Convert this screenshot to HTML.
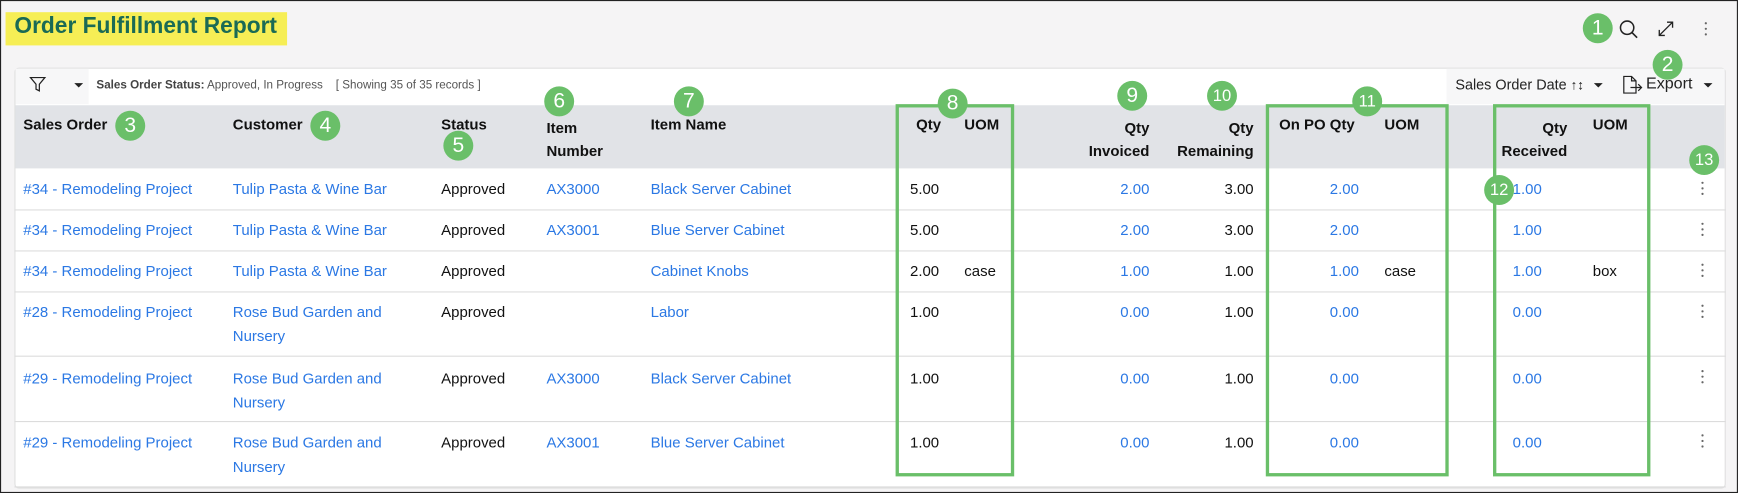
<!DOCTYPE html>
<html><head><meta charset="utf-8">
<style>
html,body{margin:0;padding:0;width:1738px;height:493px;overflow:hidden;background:#fff}
#s{position:absolute;left:0;top:0;width:1568px;height:445px;transform:scale(1.1084,1.1079);transform-origin:0 0;background:#f5f4f5;font-family:"Liberation Sans",Arial,sans-serif;box-sizing:border-box;border:1px solid #222;overflow:hidden}
.a{position:absolute;white-space:nowrap}
.t{font-size:13.5px;color:#111}
.l{font-size:13.5px;color:#2b78e4}
.h{font-size:13.5px;font-weight:bold;color:#111}
.r{text-align:right}
.c{position:absolute;width:27px;height:27px;border-radius:50%;background:#6abf69;color:#fff;font-size:19px;text-align:center;line-height:27px}
.g{position:absolute;border:3px solid #6abf69;box-sizing:border-box}
.line{position:absolute;left:12px;width:1544px;height:1px;background:#dcdcdc}
.k{position:absolute;width:3px;}
.k i{display:block;width:2px;height:2px;background:#666;border-radius:50%;margin-bottom:3px}
</style></head><body>
<div id="s">
<div class="a" style="left:4px;top:10px;width:254px;height:30px;background:#f6ee55"></div>
<div class="a" style="left:12px;top:11px;font-size:20.5px;font-weight:bold;color:#1a6a55">Order Fulfillment Report</div>

<div class="c" style="left:1427px;top:11px">1</div>
<svg class="a" style="left:1459px;top:16px" width="20" height="20" viewBox="0 0 20 20"><circle cx="8" cy="8" r="6" fill="none" stroke="#222" stroke-width="1.4"/><path d="M12.5 12.5L17 17" stroke="#222" stroke-width="1.5"/></svg>
<svg class="a" style="left:1493px;top:16px" width="18" height="18" viewBox="0 0 18 18"><path d="M3 15L15 3M10 3h5v5M3 10v5h5" fill="none" stroke="#222" stroke-width="1.2"/></svg>
<div class="k" style="left:1537px;top:19px"><i></i><i></i><i></i></div>

<div class="a" style="left:12px;top:60px;width:1544px;height:380px;background:#fff;border:1px solid #e0e0e0;border-radius:4px;box-sizing:border-box"></div>
<div class="a" style="left:13px;top:61px;width:66px;height:32px;background:#f7f7f8"></div>
<div class="a" style="left:1304px;top:61px;width:251px;height:32px;background:#f7f7f8"></div>
<svg class="a" style="left:25px;top:67px" width="16" height="16" viewBox="0 0 16 16"><path d="M1.5 2h13L9.5 8v6l-3-1.5V8z" fill="none" stroke="#222" stroke-width="1.1"/></svg>
<div class="a" style="left:66px;top:74px;border:4px solid transparent;border-top:4px solid #222"></div>
<div class="a" style="left:86px;top:70px;font-size:10.5px;color:#555"><b style="color:#444">Sales Order Status:</b> Approved, In Progress &nbsp;&nbsp; [ Showing 35 of 35 records ]</div>
<div class="a" style="left:1312px;top:68px;font-size:13px;color:#222">Sales Order Date <span style="font-size:12px">↑&#8597;</span></div>
<div class="a" style="left:1437px;top:74px;border:4px solid transparent;border-top:4px solid #222"></div>
<svg class="a" style="left:1462px;top:67px" width="20" height="18" viewBox="0 0 20 18"><path d="M2 1h7l4 4v11H2z M9 1v4h4" fill="none" stroke="#222" stroke-width="1.1"/><path d="M8 11h10M15 8l3 3-3 3" fill="none" stroke="#222" stroke-width="1.1"/></svg>
<div class="a" style="left:1484px;top:67px;font-size:14.5px;color:#222">Export</div>
<div class="a" style="left:1536px;top:74px;border:4px solid transparent;border-top:4px solid #222"></div>

<div class="a" style="left:13px;top:94px;width:1542px;height:57px;background:#e1e3e7"></div>
<div class="a h" style="left:20px;top:104px">Sales Order</div>
<div class="a h" style="left:209px;top:104px">Customer</div>
<div class="a h" style="left:397px;top:104px">Status</div>
<div class="a h" style="left:492px;top:104px;line-height:21px">Item<br>Number</div>
<div class="a h" style="left:586px;top:104px">Item Name</div>
<div class="a h r" style="left:808px;width:40px;top:104px">Qty</div>
<div class="a h" style="left:869px;top:104px">UOM</div>
<div class="a h r" style="left:980px;width:56px;top:104px;line-height:21px">Qty<br>Invoiced</div>
<div class="a h r" style="left:1050px;width:80px;top:104px;line-height:21px">Qty<br>Remaining</div>
<div class="a h" style="left:1153px;top:104px">On PO Qty</div>
<div class="a h" style="left:1248px;top:104px">UOM</div>
<div class="a h r" style="left:1340px;width:73px;top:104px;line-height:21px">Qty<br>Received</div>
<div class="a h" style="left:1436px;top:104px">UOM</div>

<div class="line" style="top:188px"></div>
<div class="line" style="top:225px"></div>
<div class="line" style="top:262px"></div>
<div class="line" style="top:320px"></div>
<div class="line" style="top:379px"></div>
<div class="line" style="top:438px"></div>

<div class="a l" style="left:20px;top:162px">#34 - Remodeling Project</div>
<div class="a l" style="left:20px;top:199px">#34 - Remodeling Project</div>
<div class="a l" style="left:20px;top:236px">#34 - Remodeling Project</div>
<div class="a l" style="left:20px;top:273px">#28 - Remodeling Project</div>
<div class="a l" style="left:20px;top:333px">#29 - Remodeling Project</div>
<div class="a l" style="left:20px;top:391px">#29 - Remodeling Project</div>

<div class="a l" style="left:209px;top:162px">Tulip Pasta &amp; Wine Bar</div>
<div class="a l" style="left:209px;top:199px">Tulip Pasta &amp; Wine Bar</div>
<div class="a l" style="left:209px;top:236px">Tulip Pasta &amp; Wine Bar</div>
<div class="a l" style="left:209px;top:270px;line-height:22px">Rose Bud Garden and<br>Nursery</div>
<div class="a l" style="left:209px;top:330px;line-height:22px">Rose Bud Garden and<br>Nursery</div>
<div class="a l" style="left:209px;top:388px;line-height:22px">Rose Bud Garden and<br>Nursery</div>

<div class="a t" style="left:397px;top:162px">Approved</div>
<div class="a t" style="left:397px;top:199px">Approved</div>
<div class="a t" style="left:397px;top:236px">Approved</div>
<div class="a t" style="left:397px;top:273px">Approved</div>
<div class="a t" style="left:397px;top:333px">Approved</div>
<div class="a t" style="left:397px;top:391px">Approved</div>

<div class="a l" style="left:492px;top:162px">AX3000</div>
<div class="a l" style="left:492px;top:199px">AX3001</div>
<div class="a l" style="left:492px;top:333px">AX3000</div>
<div class="a l" style="left:492px;top:391px">AX3001</div>

<div class="a l" style="left:586px;top:162px">Black Server Cabinet</div>
<div class="a l" style="left:586px;top:199px">Blue Server Cabinet</div>
<div class="a l" style="left:586px;top:236px">Cabinet Knobs</div>
<div class="a l" style="left:586px;top:273px">Labor</div>
<div class="a l" style="left:586px;top:333px">Black Server Cabinet</div>
<div class="a l" style="left:586px;top:391px">Blue Server Cabinet</div>

<div class="a t" style="left:820px;top:162px">5.00</div>
<div class="a t" style="left:820px;top:199px">5.00</div>
<div class="a t" style="left:820px;top:236px">2.00</div>
<div class="a t" style="left:869px;top:236px">case</div>
<div class="a t" style="left:820px;top:273px">1.00</div>
<div class="a t" style="left:820px;top:333px">1.00</div>
<div class="a t" style="left:820px;top:391px">1.00</div>

<div class="a l r" style="left:980px;width:56px;top:162px">2.00</div>
<div class="a l r" style="left:980px;width:56px;top:199px">2.00</div>
<div class="a l r" style="left:980px;width:56px;top:236px">1.00</div>
<div class="a l r" style="left:980px;width:56px;top:273px">0.00</div>
<div class="a l r" style="left:980px;width:56px;top:333px">0.00</div>
<div class="a l r" style="left:980px;width:56px;top:391px">0.00</div>

<div class="a t r" style="left:1070px;width:60px;top:162px">3.00</div>
<div class="a t r" style="left:1070px;width:60px;top:199px">3.00</div>
<div class="a t r" style="left:1070px;width:60px;top:236px">1.00</div>
<div class="a t r" style="left:1070px;width:60px;top:273px">1.00</div>
<div class="a t r" style="left:1070px;width:60px;top:333px">1.00</div>
<div class="a t r" style="left:1070px;width:60px;top:391px">1.00</div>

<div class="a l r" style="left:1165px;width:60px;top:162px">2.00</div>
<div class="a l r" style="left:1165px;width:60px;top:199px">2.00</div>
<div class="a l r" style="left:1165px;width:60px;top:236px">1.00</div>
<div class="a t" style="left:1248px;top:236px">case</div>
<div class="a l r" style="left:1165px;width:60px;top:273px">0.00</div>
<div class="a l r" style="left:1165px;width:60px;top:333px">0.00</div>
<div class="a l r" style="left:1165px;width:60px;top:391px">0.00</div>

<div class="a l r" style="left:1330px;width:60px;top:162px">1.00</div>
<div class="a l r" style="left:1330px;width:60px;top:199px">1.00</div>
<div class="a l r" style="left:1330px;width:60px;top:236px">1.00</div>
<div class="a t" style="left:1436px;top:236px">box</div>
<div class="a l r" style="left:1330px;width:60px;top:273px">0.00</div>
<div class="a l r" style="left:1330px;width:60px;top:333px">0.00</div>
<div class="a l r" style="left:1330px;width:60px;top:391px">0.00</div>

<div class="k" style="left:1534px;top:163px"><i></i><i></i><i></i></div>
<div class="k" style="left:1534px;top:200px"><i></i><i></i><i></i></div>
<div class="k" style="left:1534px;top:237px"><i></i><i></i><i></i></div>
<div class="k" style="left:1534px;top:274px"><i></i><i></i><i></i></div>
<div class="k" style="left:1534px;top:333px"><i></i><i></i><i></i></div>
<div class="k" style="left:1534px;top:391px"><i></i><i></i><i></i></div>

<div class="g" style="left:807px;top:93px;width:107px;height:336px"></div>
<div class="g" style="left:1141px;top:93px;width:165px;height:336px"></div>
<div class="g" style="left:1346px;top:93px;width:142px;height:336px"></div>

<div class="c" style="left:1490px;top:44px">2</div>
<div class="c" style="left:103px;top:99px">3</div>
<div class="c" style="left:279px;top:99px">4</div>
<div class="c" style="left:399px;top:117px">5</div>
<div class="c" style="left:490px;top:77px">6</div>
<div class="c" style="left:607px;top:77px">7</div>
<div class="c" style="left:845px;top:79px">8</div>
<div class="c" style="left:1007px;top:72px">9</div>
<div class="c" style="left:1088px;top:72px;font-size:15px">10</div>
<div class="c" style="left:1219px;top:77px;font-size:15px">11</div>
<div class="c" style="left:1338px;top:157px;font-size:15px">12</div>
<div class="c" style="left:1523px;top:130px;font-size:15px">13</div>
</div>
</body></html>
